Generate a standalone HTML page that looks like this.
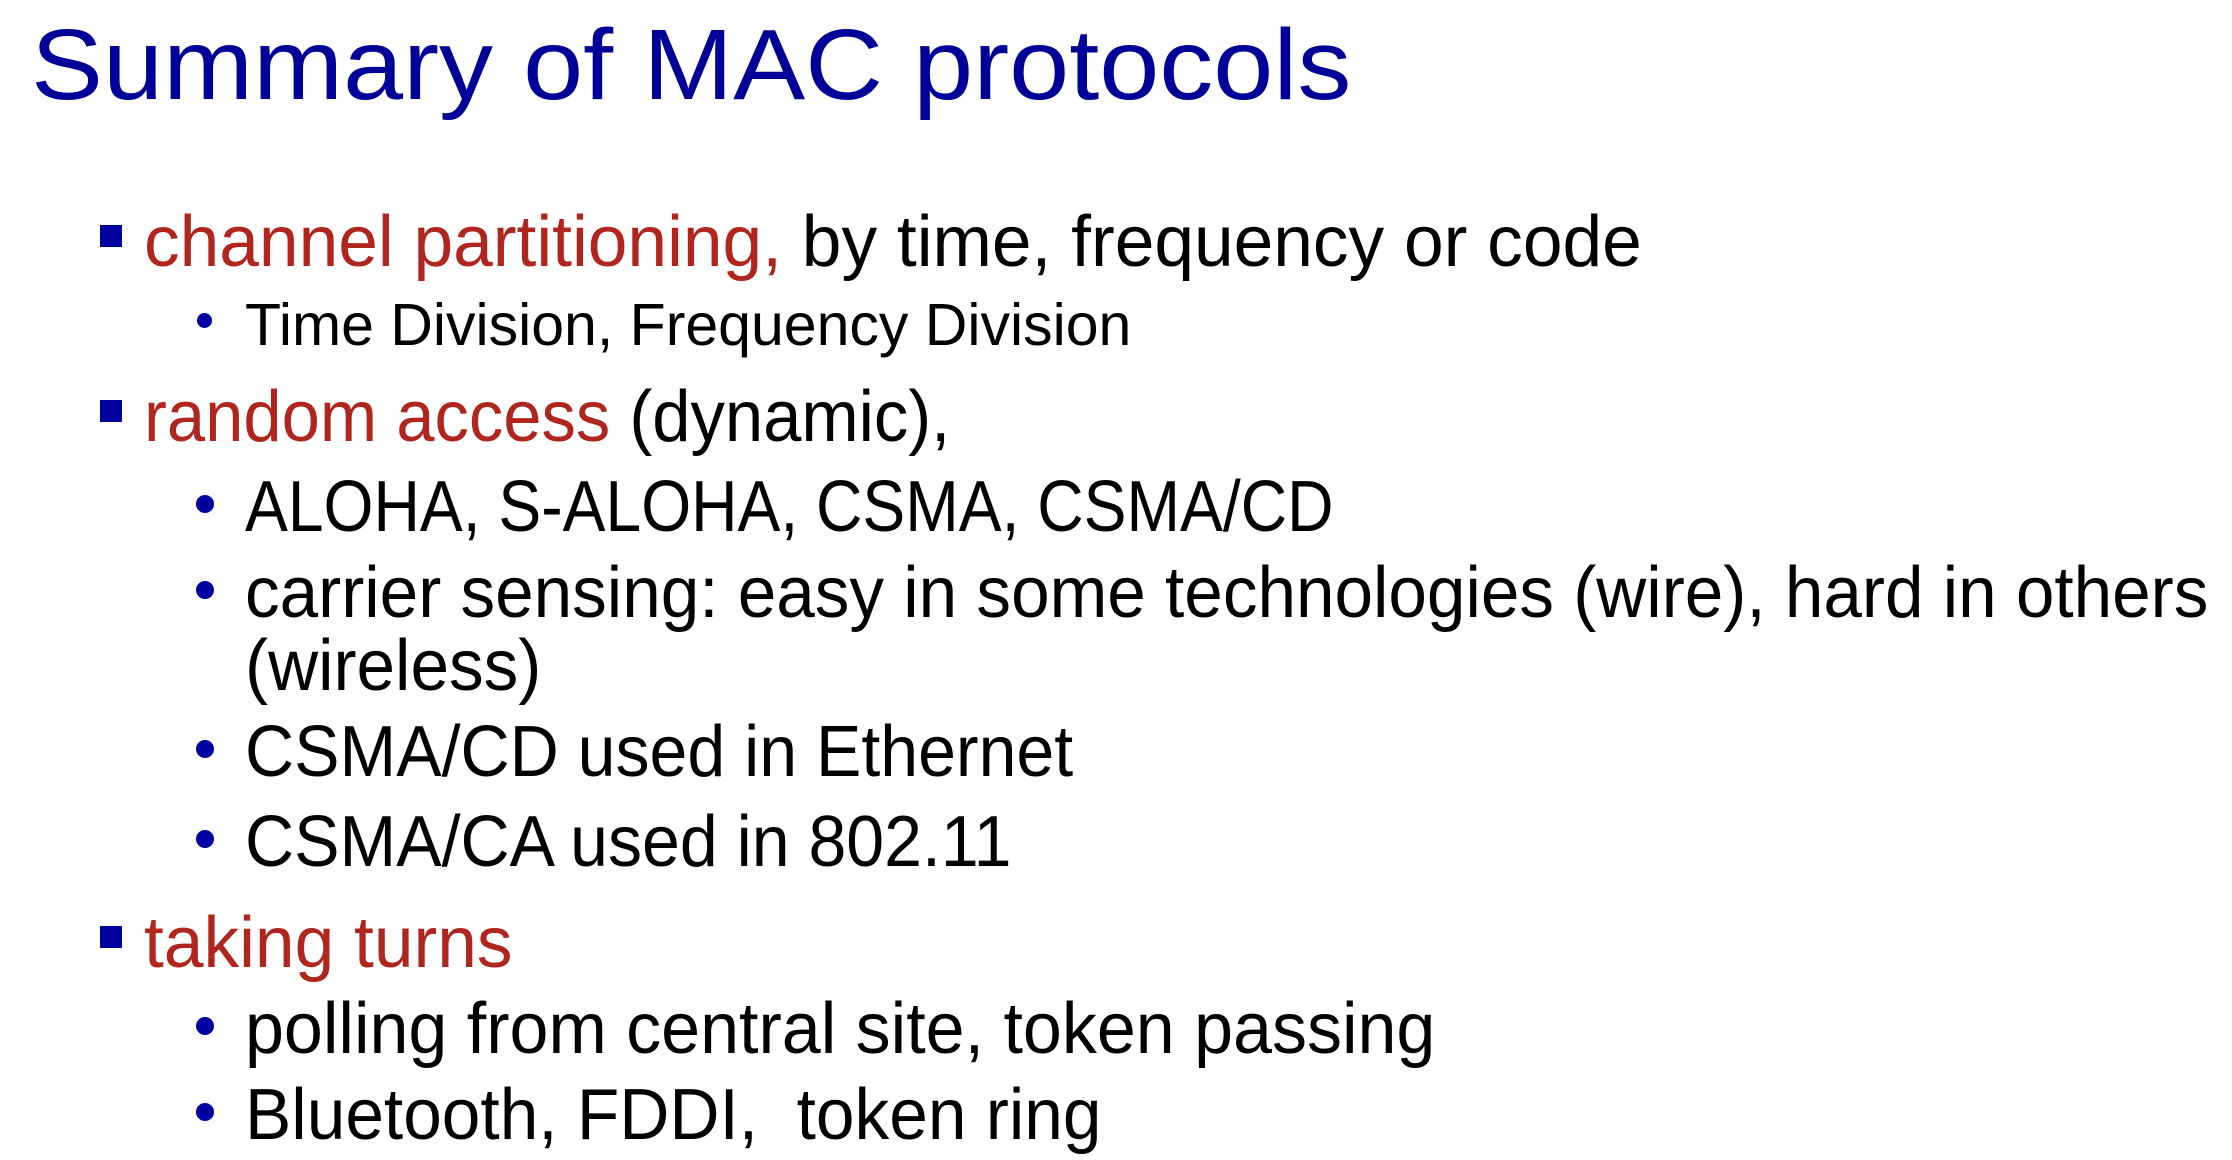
<!DOCTYPE html>
<html><head><meta charset="utf-8"><style>
html,body{margin:0;padding:0;background:#fff;width:2232px;height:1160px;overflow:hidden;position:relative}
.t{position:absolute;font-family:"Liberation Sans",sans-serif;line-height:1;white-space:pre;transform-origin:0 0;color:#000}
.r{color:#b0261e}
.sq{position:absolute;width:22px;height:22px;background:#0000a0}
.dt{position:absolute;border-radius:50%;background:#0000a0}
</style></head><body>
<div class="t" style="left:31px;top:15px;font-size:100px;color:#000099;transform:scaleX(1.08)">Summary of MAC protocols</div>

<div class="sq" style="left:100px;top:225px"></div>
<div class="t" style="left:144px;top:206px;font-size:72px;transform:scaleX(0.99)"><span class="r">channel partitioning,</span> by time, frequency or code</div>

<div class="dt" style="left:197px;top:313px;width:15px;height:15px"></div>
<div class="t" style="left:245px;top:296px;font-size:59px">Time Division, Frequency Division</div>

<div class="sq" style="left:100px;top:400px"></div>
<div class="t" style="left:144px;top:381px;font-size:72px;transform:scaleX(0.955)"><span class="r">random access</span> (dynamic),</div>

<div class="dt" style="left:196px;top:495px;width:18px;height:18px"></div>
<div class="t" style="left:245px;top:471px;font-size:72px;transform:scaleX(0.892)">ALOHA, S-ALOHA, CSMA, CSMA/CD</div>

<div class="dt" style="left:196px;top:581px;width:18px;height:18px"></div>
<div class="t" style="left:245px;top:557px;font-size:72px;transform:scaleX(0.962)">carrier sensing: easy in some technologies (wire), hard in others</div>
<div class="t" style="left:245px;top:630px;font-size:72px;transform:scaleX(0.962)">(wireless)</div>

<div class="dt" style="left:196px;top:740px;width:18px;height:18px"></div>
<div class="t" style="left:245px;top:716px;font-size:72px;transform:scaleX(0.945)">CSMA/CD used in Ethernet</div>

<div class="dt" style="left:196px;top:830px;width:18px;height:18px"></div>
<div class="t" style="left:245px;top:806px;font-size:72px;transform:scaleX(0.945)">CSMA/CA used in 802.11</div>

<div class="sq" style="left:100px;top:926px"></div>
<div class="t r" style="left:144px;top:907px;font-size:72px;transform:scaleX(0.99)">taking turns</div>

<div class="dt" style="left:196px;top:1017px;width:18px;height:18px"></div>
<div class="t" style="left:245px;top:993px;font-size:72px;transform:scaleX(0.972)">polling from central site, token passing</div>

<div class="dt" style="left:196px;top:1103px;width:18px;height:18px"></div>
<div class="t" style="left:245px;top:1079px;font-size:72px;transform:scaleX(0.964)">Bluetooth, FDDI,  token ring</div>
</body></html>
